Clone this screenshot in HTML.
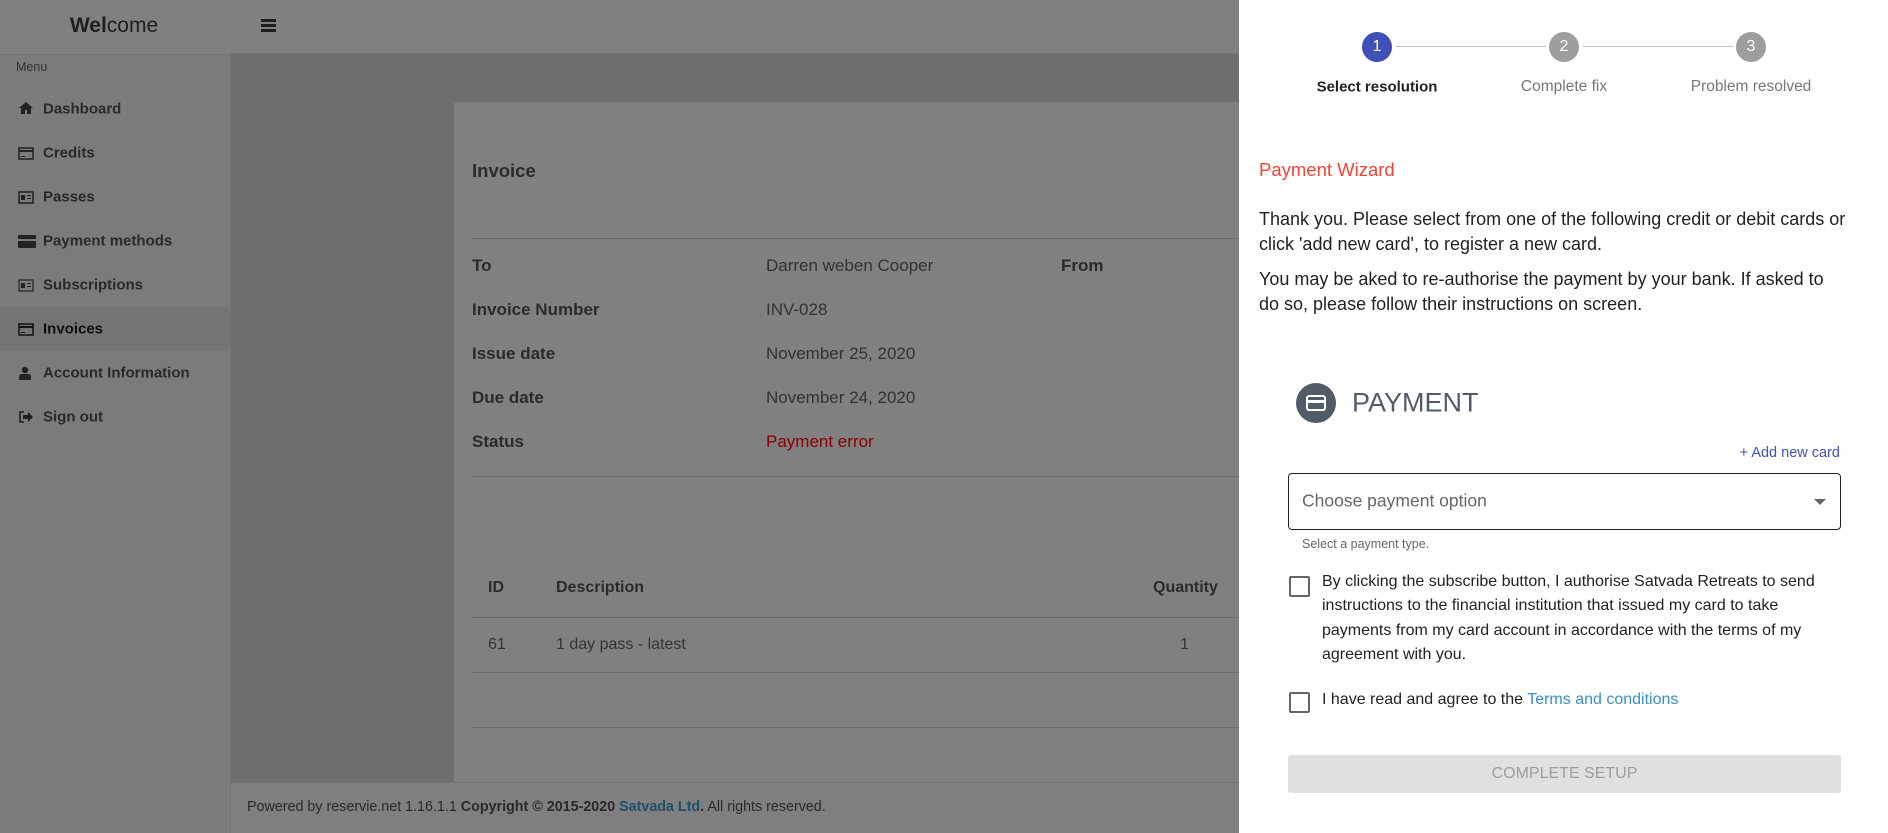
<!DOCTYPE html>
<html><head><meta charset="utf-8"><style>
*{margin:0;padding:0;box-sizing:border-box}
body{width:1888px;height:833px;position:relative;overflow:hidden;background:#6e6e6e;font-family:"Liberation Sans",sans-serif}
.a{position:absolute;white-space:nowrap}
.side{left:0;top:0;width:231px;height:833px;background:#7b7b7b;border-right:1px solid #727272}
.hdr{left:231px;top:0;width:1010px;height:54px;background:#808080;border-bottom:1px solid #777}
.nav{left:43px;font-size:15px;font-weight:bold;color:#2a2a2a;transform:translateY(-50%)}
.card{left:454px;top:102px;width:800px;height:700px;background:#808080;border-radius:3px}
.lbl{font-size:17px;font-weight:bold;color:#2b2b2b;transform:translateY(-50%)}
.val{font-size:17px;color:#333;transform:translateY(-50%)}
.line{height:1px;background:#6c6c6c}
.panel{left:1239px;top:0;width:649px;height:833px;background:#fff}
.circ{width:30px;height:30px;border-radius:50%;color:#fff;font-size:16px;text-align:center;line-height:30px;transform:translate(-50%,-50%)}
.stl{font-size:15.5px;transform:translate(-50%,-50%)}
.p{font-size:18px;color:#222;line-height:25px}
.cb{width:21px;height:21px;border:2px solid #666;border-radius:2px}
</style></head><body>
<div class="a side"></div>
<div class="a" style="left:0;top:54px;width:231px;height:1px;background:#747474"></div>
<div class="a" style="left:0;top:0;width:231px;height:54px;background:#808080"></div>
<div class="a" style="left:114px;top:26px;transform:translate(-50%,-50%);font-size:21px;color:#1e1e1e"><b>Wel</b>come</div>
<div class="a" style="left:16px;top:67px;transform:translateY(-50%);font-size:12.5px;color:#333">Menu</div>
<div class="a" style="left:0;top:307px;width:231px;height:44px;background:#747474"></div>
<div class="a nav" style="top:109px">Dashboard</div>
<div class="a nav" style="top:153px">Credits</div>
<div class="a nav" style="top:197px">Passes</div>
<div class="a nav" style="top:241px">Payment methods</div>
<div class="a nav" style="top:285px">Subscriptions</div>
<div class="a nav" style="top:329px;color:#0e0e0e">Invoices</div>
<div class="a nav" style="top:373px">Account Information</div>
<div class="a nav" style="top:417px">Sign out</div>
<svg class="a" style="left:18px;top:101px" width="16" height="14" viewBox="0 0 16 14"><path d="M8 1L1 7h2v6h4V9h2v4h4V7h2z" fill="#222"/></svg>
<svg class="a" style="left:18px;top:147px" width="16" height="13" viewBox="0 0 16 13"><rect x="1" y="1" width="14" height="11" fill="none" stroke="#222" stroke-width="1.5"/><rect x="1" y="3" width="14" height="2" fill="#222"/><rect x="3" y="9" width="4" height="1" fill="#222"/></svg>
<svg class="a" style="left:18px;top:191px" width="16" height="13" viewBox="0 0 16 13"><rect x="1" y="1" width="14" height="11" fill="none" stroke="#222" stroke-width="1.5"/><rect x="3" y="4" width="4" height="5" fill="#222"/><rect x="9" y="4" width="4" height="1" fill="#222"/><rect x="9" y="7" width="4" height="1" fill="#222"/></svg>
<svg class="a" style="left:18px;top:235px" width="18" height="13" viewBox="0 0 18 13"><rect x="0" y="0" width="18" height="13" rx="1" fill="#222"/><rect x="0" y="4" width="18" height="2" fill="#7b7b7b"/></svg>
<svg class="a" style="left:18px;top:279px" width="16" height="13" viewBox="0 0 16 13"><rect x="1" y="1" width="14" height="11" fill="none" stroke="#222" stroke-width="1.2"/><rect x="3" y="4" width="4" height="5" fill="#222"/><rect x="9" y="4" width="4" height="1" fill="#222"/><rect x="9" y="7" width="4" height="1" fill="#222"/></svg>
<svg class="a" style="left:18px;top:323px" width="16" height="13" viewBox="0 0 16 13"><rect x="1" y="1" width="14" height="11" fill="none" stroke="#111" stroke-width="1.5"/><rect x="1" y="3" width="14" height="2" fill="#111"/><rect x="3" y="9" width="4" height="1" fill="#111"/></svg>
<svg class="a" style="left:19px;top:366px" width="12" height="14" viewBox="0 0 12 14"><circle cx="6" cy="4" r="3.2" fill="#222"/><path d="M0 14v-3q0-3 3-3h6q3 0 3 3v3z" fill="#222"/></svg>
<svg class="a" style="left:18px;top:411px" width="15" height="12" viewBox="0 0 15 12"><path d="M6 1H2v10h4" fill="none" stroke="#222" stroke-width="1.6"/><path d="M5 4h5V1l5 5-5 5V8H5z" fill="#222"/></svg>
<div class="a hdr"></div>
<div class="a" style="left:261px;top:19px;width:15px;height:3px;background:#1e1e1e;box-shadow:0 5px 0 #1e1e1e,0 10px 0 #1e1e1e"></div>
<div class="a card"></div>
<div class="a lbl" style="left:472px;top:171px;font-size:18.5px">Invoice</div>
<div class="a line" style="left:472px;top:238px;width:780px"></div>
<div class="a lbl" style="left:472px;top:266px">To</div>
<div class="a val" style="left:766px;top:266px">Darren weben Cooper</div>
<div class="a lbl" style="left:1061px;top:266px">From</div>
<div class="a lbl" style="left:472px;top:310px">Invoice Number</div>
<div class="a val" style="left:766px;top:310px">INV-028</div>
<div class="a lbl" style="left:472px;top:354px">Issue date</div>
<div class="a val" style="left:766px;top:354px">November 25, 2020</div>
<div class="a lbl" style="left:472px;top:398px">Due date</div>
<div class="a val" style="left:766px;top:398px">November 24, 2020</div>
<div class="a lbl" style="left:472px;top:442px">Status</div>
<div class="a val" style="left:766px;top:442px;color:#8b0000">Payment error</div>
<div class="a line" style="left:472px;top:476px;width:780px"></div>
<div class="a lbl" style="left:488px;top:588px;font-size:16px">ID</div>
<div class="a lbl" style="left:556px;top:588px;font-size:16px">Description</div>
<div class="a lbl" style="left:1153px;top:588px;font-size:16px">Quantity</div>
<div class="a line" style="left:472px;top:617px;width:780px"></div>
<div class="a val" style="left:488px;top:645px;font-size:16px">61</div>
<div class="a val" style="left:556px;top:645px;font-size:16px">1 day pass - latest</div>
<div class="a val" style="left:1180px;top:645px;font-size:16px">1</div>
<div class="a line" style="left:472px;top:672px;width:780px"></div>
<div class="a line" style="left:472px;top:727px;width:780px"></div>
<div class="a" style="left:231px;top:782px;width:1010px;height:51px;background:#7f7f7f;border-top:1px solid #727272"></div>
<div class="a" style="left:247px;top:807px;transform:translateY(-50%);font-size:14.3px;color:#2a2a2a">Powered by reservie.net 1.16.1.1 <b>Copyright © 2015-2020 <span style="color:#1f4f6b">Satvada Ltd</span>.</b> All rights reserved.</div>

<div class="a panel"></div>
<div class="a" style="left:1396px;top:46px;width:150px;height:1px;background:#bdbdbd"></div>
<div class="a" style="left:1583px;top:46px;width:150px;height:1px;background:#bdbdbd"></div>
<div class="a circ" style="left:1377px;top:47px;background:#3f51b5">1</div>
<div class="a circ" style="left:1564px;top:47px;background:#9e9e9e">2</div>
<div class="a circ" style="left:1751px;top:47px;background:#9e9e9e">3</div>
<div class="a stl" style="left:1377px;top:87px;color:#222;font-weight:bold;font-size:15px">Select resolution</div>
<div class="a stl" style="left:1564px;top:87px;color:#777">Complete fix</div>
<div class="a stl" style="left:1751px;top:87px;color:#777">Problem resolved</div>
<div class="a" style="left:1259px;top:170px;transform:translateY(-50%);font-size:18.5px;color:#f44336">Payment Wizard</div>
<div class="a p" style="left:1259px;top:207px">Thank you. Please select from one of the following credit or debit cards or<br>click 'add new card', to register a new card.</div>
<div class="a p" style="left:1259px;top:267px">You may be aked to re-authorise the payment by your bank. If asked to<br>do so, please follow their instructions on screen.</div>
<div class="a" style="left:1296px;top:383px;width:40px;height:40px;border-radius:50%;background:#525c68"></div>
<svg class="a" style="left:1305px;top:392px" width="22" height="22" viewBox="0 0 22 22"><rect x="2" y="4" width="18" height="14" rx="2" fill="none" stroke="#fff" stroke-width="2"/><rect x="2" y="8" width="18" height="3" fill="#fff"/></svg>
<div class="a" style="left:1352px;top:403px;transform:translateY(-50%);font-size:27px;color:#525c68">PAYMENT</div>
<div class="a" style="right:48px;top:453px;transform:translateY(-50%);font-size:14.5px;color:#3f51b5">+ Add new card</div>
<div class="a" style="left:1288px;top:473px;width:553px;height:57px;border:1.5px solid #222;border-radius:4px"></div>
<div class="a" style="left:1302px;top:501px;transform:translateY(-50%);font-size:17.5px;color:#666">Choose payment option</div>
<div class="a" style="left:1814px;top:499px;width:0;height:0;border-left:6px solid transparent;border-right:6px solid transparent;border-top:6px solid #666"></div>
<div class="a" style="left:1302px;top:544px;transform:translateY(-50%);font-size:12.5px;color:#666">Select a payment type.</div>
<div class="a cb" style="left:1289px;top:576px"></div>
<div class="a" style="left:1322px;top:570px;font-size:16px;line-height:24.4px;color:#222">By clicking the subscribe button, I authorise Satvada Retreats to send<br>instructions to the financial institution that issued my card to take<br>payments from my card account in accordance with the terms of my<br>agreement with you.</div>
<div class="a cb" style="left:1289px;top:692px"></div>
<div class="a" style="left:1322px;top:700px;transform:translateY(-50%);font-size:16px;color:#222">I have read and agree to the <span style="color:#3a8fc4">Terms and conditions</span></div>
<div class="a" style="left:1288px;top:755px;width:553px;height:38px;background:#e0e0e0;border-radius:3px;color:#9e9e9e;font-size:16px;text-align:center;line-height:38px">COMPLETE SETUP</div>
</body></html>
